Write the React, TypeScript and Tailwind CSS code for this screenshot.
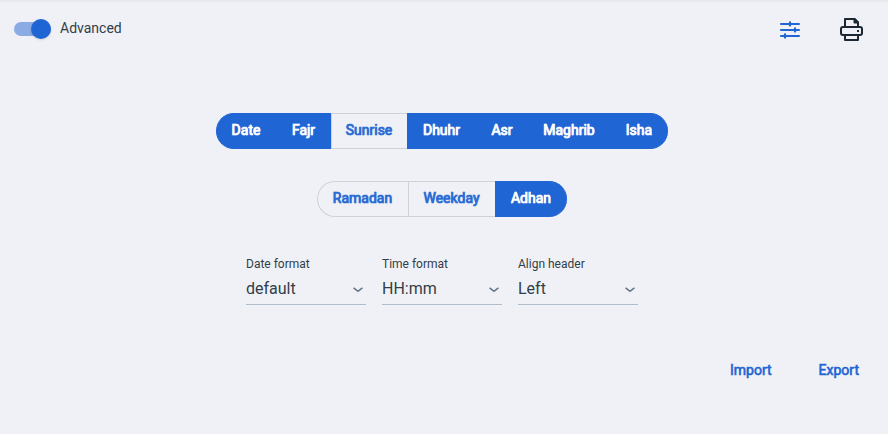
import React from "react";

type Segment = { label: string; on: boolean; width: string };

const columns: Segment[] = [
  { label: "Date", on: true, width: "w-[60px]" },
  { label: "Fajr", on: true, width: "w-[55px]" },
  { label: "Sunrise", on: false, width: "w-[76px]" },
  { label: "Dhuhr", on: true, width: "w-[69px]" },
  { label: "Asr", on: true, width: "w-[52px]" },
  { label: "Maghrib", on: true, width: "w-[82px]" },
  { label: "Isha", on: true, width: "w-[58px]" },
];

const extras: Segment[] = [
  { label: "Ramadan", on: false, width: "w-[91px]" },
  { label: "Weekday", on: false, width: "w-[87px]" },
  { label: "Adhan", on: true, width: "w-[72px]" },
];

const fields = [
  { label: "Date format", value: "default" },
  { label: "Time format", value: "HH:mm" },
  { label: "Align header", value: "Left" },
];

function SegmentedGroup({ items }: { items: Segment[] }) {
  return (
    <div className="flex h-9">
      {items.map((s) => (
        <button
          key={s.label}
          className={`${s.width} flex h-9 items-center justify-center border-y border-l pr-px pb-0.5 text-sm font-normal [text-shadow:0_0_1px_currentColor] [-webkit-text-stroke:0.6px] first:rounded-l-full last:rounded-r-full ${
            s.on ? "border-[#2065d4] bg-[#2065d4] text-white" : "border-[#cdd2da] text-[#2b6bd3]"
          }`}
        >
          {s.label}
        </button>
      ))}
    </div>
  );
}

function SlidersIcon() {
  return (
    <svg width="20" height="18" viewBox="0 0 20 18" fill="none" stroke="#2065d4" strokeLinecap="round">
      <path d="M.9 3h18.2M.9 9h18.2M.9 15h18.2" strokeWidth="1.8" />
      <path d="M10 1.4v3.2M15 7.4v3.2M5 13.4v3.2" strokeWidth="2.2" />
    </svg>
  );
}

function PrinterIcon() {
  return (
    <svg width="23" height="23" viewBox="0 0 23 23" fill="none" stroke="#1b2733" strokeWidth="2" strokeLinejoin="round">
      <path d="M5 9V1h9.500l3.500 3.500V9M5 17H3a2 2 0 0 1-2-2v-4a2 2 0 0 1 2-2h17a2 2 0 0 1 2 2v4a2 2 0 0 1-2 2h-2M5 17h13v5H5z" />
      <path d="M14.500 1v3.500H18z" fill="#1b2733" />
      <path d="M17 13h2" />
    </svg>
  );
}

export default function App() {
  return (
    <main className="flex h-[434px] w-[888px] flex-col bg-[#f0f1f6] font-['Roboto',sans-serif] text-[#323e48]">
      <div className="h-[3px] shrink-0 bg-linear-to-b from-[#e4e5e9] to-[#f0f1f6]" />
      <header className="flex h-[52px] items-center justify-between pr-[25px] pl-3.5">
        <label className="flex items-center gap-[9px] text-sm">
          <span className="flex h-3.5 w-[37px] items-center justify-end rounded-full bg-[#8aabe4]">
            <span className="size-5 shrink-0 rounded-full bg-[#2065d4] shadow-sm" />
          </span>
          <span className="pb-0.5">Advanced</span>
        </label>
        <div className="flex items-start gap-10 pt-px">
          <SlidersIconBox />
          <PrinterIcon />
        </div>
      </header>

      <section className="mt-[58px] flex flex-col items-center gap-8 pr-1">
        <SegmentedGroup items={columns} />
        <SegmentedGroup items={extras} />
      </section>

      <section className="mt-[39px] flex justify-center gap-4 pr-1">
        {fields.map((f) => (
          <div key={f.label} className="flex h-[49px] w-[120px] flex-col border-b border-[#b0bdcb]">
            <span className="text-xs leading-4">{f.label}</span>
            <div className="flex flex-1 items-center justify-between pt-0.5 pr-[3px]">
              <span className="text-base">{f.value}</span>
              <svg className="mt-px" width="10" height="6" viewBox="0 0 10 6" fill="none" stroke="#607386" strokeWidth="1.5">
                <path d="M.6 .8 5 4.3 9.4 .8" />
              </svg>
            </div>
          </div>
        ))}
      </section>

      <footer className="mt-[55px] flex justify-end gap-[47px] pr-[29px] text-sm font-normal text-[#2065d4] [-webkit-text-stroke:0.6px]">
        <button>Import</button>
        <button>Export</button>
      </footer>
    </main>
  );
}

function SlidersIconBox() {
  return (
    <span className="flex pt-[3px]">
      <SlidersIcon />
    </span>
  );
}
